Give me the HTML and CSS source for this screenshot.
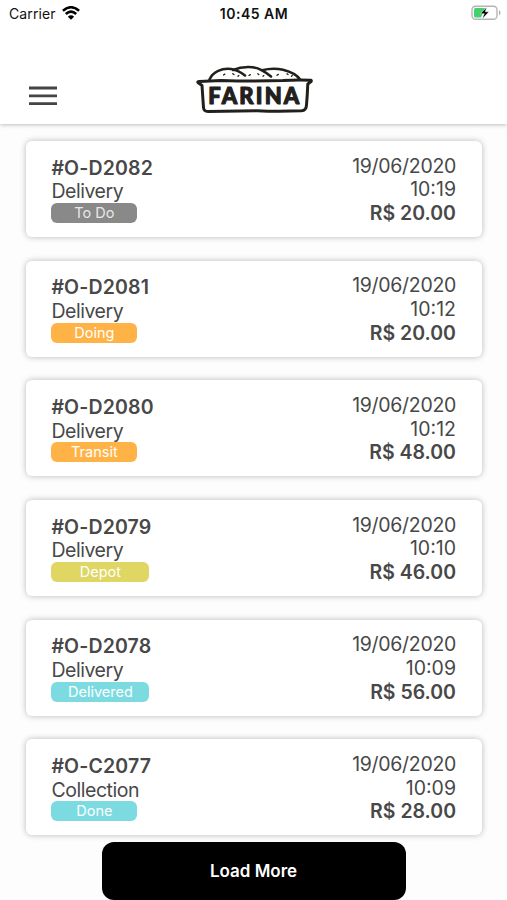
FILE: index.html
```html
<!DOCTYPE html>
<html lang="en">
<head>
<meta charset="utf-8">
<title>Farina orders</title>
<link rel="stylesheet" href="styles.css">
</head>
<body>
<div class="app">
  <header class="header">
    <div class="status">
      <div class="carrier">
        <span>Carrier</span>
        <svg class="wifi" width="18" height="14" viewBox="0 0 18 14" fill="none" stroke="#000" stroke-width="2.5"><path d="M.9 4.8Q9-2.4 17.1 4.8"/><path d="M3.8 8Q9 3.2 14.2 8"/><path d="M9 13.8L5.9 10.7Q9 8 12.1 10.7Z" fill="#000" stroke="none"/></svg>
      </div>
      <span class="clock">10:45 AM</span>
      <svg class="battery" width="31" height="16" viewBox="0 0 31 16"><rect x="1" y="1.2" width="25" height="13" rx="3.5" fill="#fff" stroke="#b5b5b5" stroke-width="1.4"/><path d="M28 5Q31 7.7 28 10.4Z" fill="#aaa"/><path d="M4.5 3H14L10 12.5H4.5Q3 12.5 3 11V4.5Q3 3 4.5 3Z" fill="#42d16b"/><path d="M15.8 2L9.5 8.7H13.3L11.2 14L18 6.8H14.3Z" fill="#000" stroke="#fff" stroke-width=".5"/></svg>
    </div>
    <div class="bar">
      <svg class="menu" width="28" height="20" viewBox="0 0 28 20" stroke="#454545" stroke-width="2.8"><path d="M0 2H28M0 9.8H28M0 17.6H28"/></svg>
      <svg class="logo" width="120" height="50" viewBox="0 0 120 50" fill="none" stroke="#22201d" stroke-linecap="round" stroke-linejoin="round">
        <path stroke-width="2.6" d="M14.5 14.5C18 6.5 27 3 36 4Q43 5 50 10.5M38 5C48 .8 60 1.3 66 4.8Q71 7.3 76 11.5M67 5.2Q78 2.5 88 4.7Q101 8 105 14.5"/>
        <path stroke-width="3" d="M3 17.5Q2.3 16.3 4.5 16.5L26 15.5Q60 16.5 88 15.5Q103 14.5 116 15.2Q117 16.5 114.8 17.5L112.8 19Q112.3 31 111.5 40Q111.3 45.5 106.5 45.8Q82 46.7 62 45.7Q37 46 13 46.5Q8.8 46.5 8.5 42.5L7 20.5Z"/>
        <path stroke-width="1.3" d="M28.5 10l1.3-.9M37.8 8.7l1.1.9M43 11.2l.8-.7M54 10.5l1.3-.9M62.8 8.8l1 .8M68 11.2l.8-.6M82 10.3l1.3-.9M92 8.8l1 .8M96.5 11.2l.8-.7"/>
        <text class="brand" x="13.3" y="39.4" textLength="91" lengthAdjust="spacing">FARINA</text>
      </svg>
    </div>
  </header>
  <main class="orders">
    <article class="card"><div class="info"><h2>#O-D2082</h2><p>Delivery</p><span class="badge todo">To Do</span></div><div class="details"><span>19/06/2020</span><span class="time">10:19</span><strong>R$ 20.00</strong></div></article>
    <article class="card"><div class="info"><h2>#O-D2081</h2><p>Delivery</p><span class="badge doing">Doing</span></div><div class="details"><span>19/06/2020</span><span class="time">10:12</span><strong>R$ 20.00</strong></div></article>
    <article class="card"><div class="info"><h2>#O-D2080</h2><p>Delivery</p><span class="badge doing">Transit</span></div><div class="details"><span>19/06/2020</span><span class="time">10:12</span><strong>R$ 48.00</strong></div></article>
    <article class="card"><div class="info"><h2>#O-D2079</h2><p>Delivery</p><span class="badge depot wide">Depot</span></div><div class="details"><span>19/06/2020</span><span class="time">10:10</span><strong>R$ 46.00</strong></div></article>
    <article class="card"><div class="info"><h2>#O-D2078</h2><p>Delivery</p><span class="badge done wide">Delivered</span></div><div class="details"><span>19/06/2020</span><span class="time">10:09</span><strong>R$ 56.00</strong></div></article>
    <article class="card"><div class="info"><h2>#O-C2077</h2><p>Collection</p><span class="badge done">Done</span></div><div class="details"><span>19/06/2020</span><span class="time">10:09</span><strong>R$ 28.00</strong></div></article>
  </main>
  <button class="load">Load More</button>
</div>
</body>
</html>
```
FILE: styles.css
```css
* { box-sizing: border-box; }
body { margin: 0; background: #fdfdfd; color: #484848; font-family: Inter, "Liberation Sans", sans-serif; }
.app { height: 900px; overflow: hidden; display: flex; flex-direction: column; }
.header { height: 124px; flex: none; background: #fff; box-shadow: 0 1px 4px rgba(0, 0, 0, .25); }
.status { height: 28px; display: grid; grid-template-columns: 1fr auto 1fr; align-items: center; padding: 0 5px 2px 9px; color: #111; font-size: 14px; }
.carrier { display: flex; align-items: center; gap: 6px; letter-spacing: .1px; }
.clock { margin-right: 3px; font-weight: 600; letter-spacing: .5px; }
.battery { justify-self: end; }
.bar { height: 96px; display: flex; align-items: flex-start; padding-left: 29px; }
.menu { margin-top: 58px; }
.logo { margin: 37px 0 0 138px; }
.brand { font-family: Lato, sans-serif; font-size: 22px; font-weight: 900; fill: #22201d; stroke: #22201d; stroke-width: 1.1px; }
.orders { display: flex; flex-direction: column; gap: 23.7px; padding: 17px 25px 0 26px; }
.card { height: 96px; flex: none; display: flex; justify-content: space-between; padding: 13.6px 26px 0 25.4px; background: #fff; border-radius: 6px; box-shadow: 0 0 6px rgba(0, 0, 0, .28); font-size: 19.5px; line-height: 23.7px; }
.info { display: flex; flex-direction: column; align-items: flex-start; padding-top: 2px; }
.info h2 { margin: 0; font-size: 19.5px; font-weight: 600; line-height: 23.7px; letter-spacing: .15px; }
.info p { margin: 0; line-height: 23.7px; letter-spacing: -.45px; }
.badge { width: 86px; height: 20px; margin-top: -1px; border-radius: 6px; color: #fff; font-size: 14.5px; line-height: 20px; text-align: center; }
.wide { width: 98px; }
.todo { background: #898989; color: #e8e8e8; }
.doing { background: #ffb347; }
.depot { background: #e0d663; }
.done { background: #7cdbe1; }
.details { display: flex; flex-direction: column; align-items: flex-end; }
.details span { letter-spacing: -.3px; }
.details .time { letter-spacing: 0; }
.details strong { font-weight: 600; }
.load { width: 304px; height: 58px; flex: none; align-self: center; margin-top: 6.5px; padding: 1px 0 0; border: 0; border-radius: 12px; background: #000; color: #fff; font: 600 17px Inter, sans-serif; }
```
